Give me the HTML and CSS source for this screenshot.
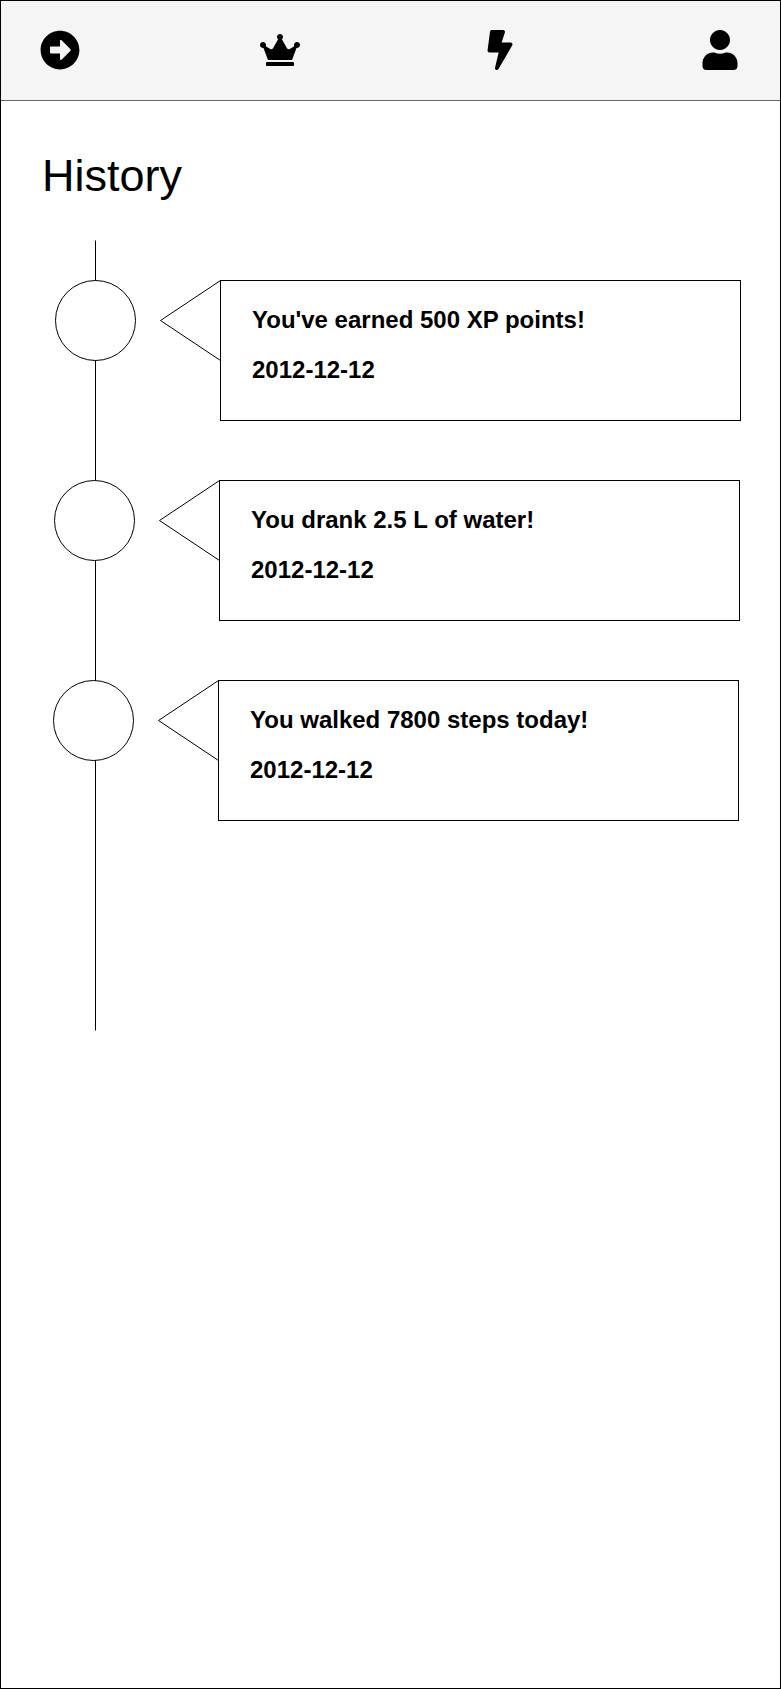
FILE: index.html
```html
<!DOCTYPE html>
<html lang="en">
<head>
<meta charset="utf-8">
<title>History</title>
<link rel="stylesheet" href="styles.css">
</head>
<body>
<div class="screen">
  <nav class="topbar">
    <svg class="icon" viewBox="0 0 512 512"><path d="M256 8c137 0 248 111 248 248S393 504 256 504 8 393 8 256 119 8 256 8zM140 300h116v70.9c0 10.7 13 16.1 20.5 8.5l114.3-114.9c4.7-4.7 4.7-12.2 0-16.9l-114.3-115c-7.6-7.6-20.5-2.2-20.5 8.5V212H140c-6.6 0-12 5.4-12 12v64c0 6.6 5.4 12 12 12z"/></svg>
    <svg class="icon" viewBox="0 0 640 512"><path d="M528 448H112c-8.8 0-16 7.2-16 16v32c0 8.8 7.2 16 16 16h416c8.8 0 16-7.2 16-16v-32c0-8.8-7.2-16-16-16zm64-320c-26.5 0-48 21.5-48 48 0 7.1 1.6 13.7 4.4 19.8L476 239.2c-15.4 9.2-35.3 4-44.2-11.6L350.3 85C361 76.2 368 63 368 48c0-26.5-21.5-48-48-48s-48 21.5-48 48c0 15 7 28.2 17.7 37l-81.5 142.6c-8.9 15.6-28.9 20.8-44.2 11.6l-72.3-43.4c2.7-6 4.4-12.7 4.4-19.8 0-26.5-21.5-48-48-48S0 149.5 0 176s21.5 48 48 48c2.6 0 5.2-.4 7.7-.8L128 416h384l72.3-192.8c2.5.4 5.1.8 7.7.8 26.5 0 48-21.5 48-48s-21.5-48-48-48z"/></svg>
    <svg class="icon" viewBox="0 0 320 512"><path d="M296 160H180.6l42.6-129.8C227.2 15 215.7 0 200 0H56C44 0 33.8 8.9 32.2 20.8l-32 240C-1.7 275.2 9.5 288 24 288h118.7L96.6 482.5c-3.6 15.2 8 29.5 23.3 29.5 8.4 0 16.4-4.4 20.8-12l176-304c9.3-15.9-2.2-36-20.7-36z"/></svg>
    <svg class="icon" viewBox="0 0 448 512"><path d="M224 256c70.7 0 128-57.3 128-128S294.7 0 224 0 96 57.3 96 128s57.3 128 128 128zm89.6 32h-16.7c-22.2 10.2-46.9 16-72.9 16s-50.6-5.8-72.9-16h-16.7C60.2 288 0 348.2 0 422.4V464c0 26.5 21.5 48 48 48h352c26.5 0 48-21.5 48-48v-41.6c0-74.2-60.2-134.4-134.4-134.4z"/></svg>
  </nav>
  <h1 class="title">History</h1>
  <ol class="timeline">
    <li class="event">
      <svg class="dot" viewBox="0 0 81 81"><circle cx="40.5" cy="40.5" r="40"/></svg>
      <svg class="pointer" viewBox="0 0 61 81"><path d="M60.5 .5L.5 40.5l60 40"/></svg>
      <div class="card"><p>You've earned 500 XP points!</p><p>2012-12-12</p></div>
    </li>
    <li class="event">
      <svg class="dot" viewBox="0 0 81 81"><circle cx="40.5" cy="40.5" r="40"/></svg>
      <svg class="pointer" viewBox="0 0 61 81"><path d="M60.5 .5L.5 40.5l60 40"/></svg>
      <div class="card"><p>You drank 2.5 L of water!</p><p>2012-12-12</p></div>
    </li>
    <li class="event">
      <svg class="dot" viewBox="0 0 81 81"><circle cx="40.5" cy="40.5" r="40"/></svg>
      <svg class="pointer" viewBox="0 0 61 81"><path d="M60.5 .5L.5 40.5l60 40"/></svg>
      <div class="card"><p>You walked 7800 steps today!</p><p>2012-12-12</p></div>
    </li>
  </ol>
</div>
</body>
</html>
```
FILE: styles.css
```css
* { box-sizing: border-box; }

body {
  margin: 0;
  background: #fff;
  color: #000;
  font-family: "Liberation Sans", Arial, sans-serif;
}

.screen {
  width: 781px;
  height: 1689px;
  border: 1px solid #000;
}

.topbar {
  display: flex;
  justify-content: space-between;
  align-items: center;
  height: 100px;
  padding: 0 40px 1px 39px;
  background: #f5f5f5;
  border-bottom: 1px solid #666;
}

.icon {
  width: 40px;
  height: 40px;
}

.title {
  margin: 49px 0 0 41px;
  font-size: 45px;
  font-weight: 400;
  line-height: 52px;
}

.timeline {
  display: flex;
  flex-direction: column;
  gap: 59px;
  height: 791px;
  margin: 38px 0 0;
  padding: 40px 0 0 54px;
  list-style: none;
  background: linear-gradient(#808080 1px, #000 1px, #000 790px, #808080 790px) 94px 0 / 1px 100% no-repeat;
}

.event {
  display: flex;
  align-items: flex-start;
}

.event:nth-child(2) { margin-left: -1px; }
.event:nth-child(3) { margin-left: -2px; }

.dot,
.pointer {
  display: block;
  flex: none;
  height: 81px;
  stroke: #000;
  stroke-width: 1;
}

.dot {
  width: 81px;
  fill: #fff;
}

.pointer {
  width: 61px;
  margin-left: 24px;
  fill: none;
}

.card {
  flex: none;
  width: 521px;
  height: 141px;
  margin-left: -1px;
  padding: 25px 31px;
  border: 1px solid #000;
}

.card p {
  margin: 0 0 22px;
  font-size: 24px;
  font-weight: 700;
  line-height: 28px;
}
```
